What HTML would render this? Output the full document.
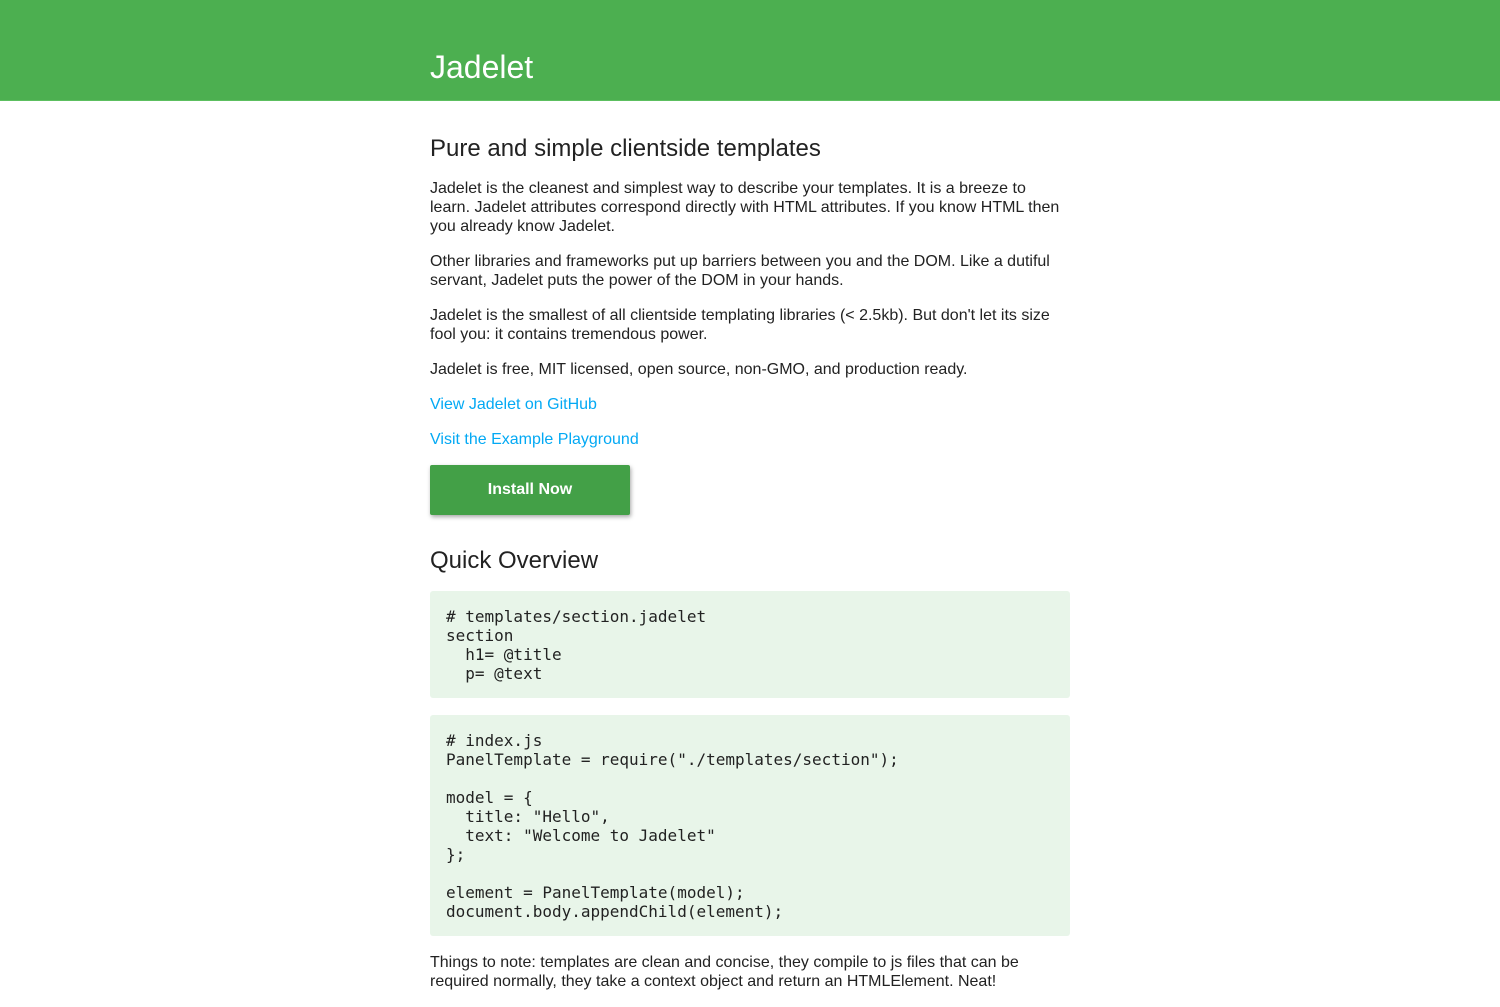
<!DOCTYPE html>
<html><head><meta charset="utf-8"><style>
body{margin:0;font-family:"Liberation Sans",Arial,sans-serif;color:#222;background:#fff;font-size:16px;line-height:19px}
header{background:#4CAF50;height:101px;border-bottom:1px solid #5cbf60;box-sizing:border-box}
header h1{margin:0;position:absolute;left:430px;top:48px;font-size:32px;line-height:38px;font-weight:normal;color:#fff}
main{position:absolute;left:430px;top:101px;width:640px}
h2{font-size:24px;font-weight:normal;line-height:28px;margin:34px 0 16px}
p{margin:0 0 16px;white-space:nowrap}
a{color:#03A9F4;text-decoration:none}
.btn{display:block;width:200px;height:50px;background:#43A047;color:#fff;font-weight:bold;text-align:center;line-height:50px;border-radius:2px;box-shadow:1px 2px 4px rgba(0,0,0,.35);margin-top:16px}
pre{background:#E8F5E9;border-radius:3px;margin:0 0 17px;padding:16px 16px 15px;font-family:"DejaVu Sans Mono","Liberation Mono",monospace;font-size:16px;line-height:19px;color:#222}
</style></head><body>
<header><h1>Jadelet</h1></header>
<main>
<h2>Pure and simple clientside templates</h2>
<p>Jadelet is the cleanest and simplest way to describe your templates. It is a breeze to<br>learn. Jadelet attributes correspond directly with HTML attributes. If you know HTML then<br>you already know Jadelet.</p>
<p>Other libraries and frameworks put up barriers between you and the DOM. Like a dutiful<br>servant, Jadelet puts the power of the DOM in your hands.</p>
<p>Jadelet is the smallest of all clientside templating libraries (&lt; 2.5kb). But don't let its size<br>fool you: it contains tremendous power.</p>
<p>Jadelet is free, MIT licensed, open source, non-GMO, and production ready.</p>
<p><a>View Jadelet on GitHub</a></p>
<p style="margin:0"><a>Visit the Example Playground</a></p>
<a class="btn">Install Now</a>
<h2 style="margin:32px 0 16px">Quick Overview</h2>
<pre># templates/section.jadelet
section
  h1= @title
  p= @text</pre>
<pre># index.js
PanelTemplate = require("./templates/section");

model = {
  title: "Hello",
  text: "Welcome to Jadelet"
};

element = PanelTemplate(model);
document.body.appendChild(element);</pre>
<p>Things to note: templates are clean and concise, they compile to js files that can be<br>required normally, they take a context object and return an HTMLElement. Neat!</p>
</main>
</body></html>
